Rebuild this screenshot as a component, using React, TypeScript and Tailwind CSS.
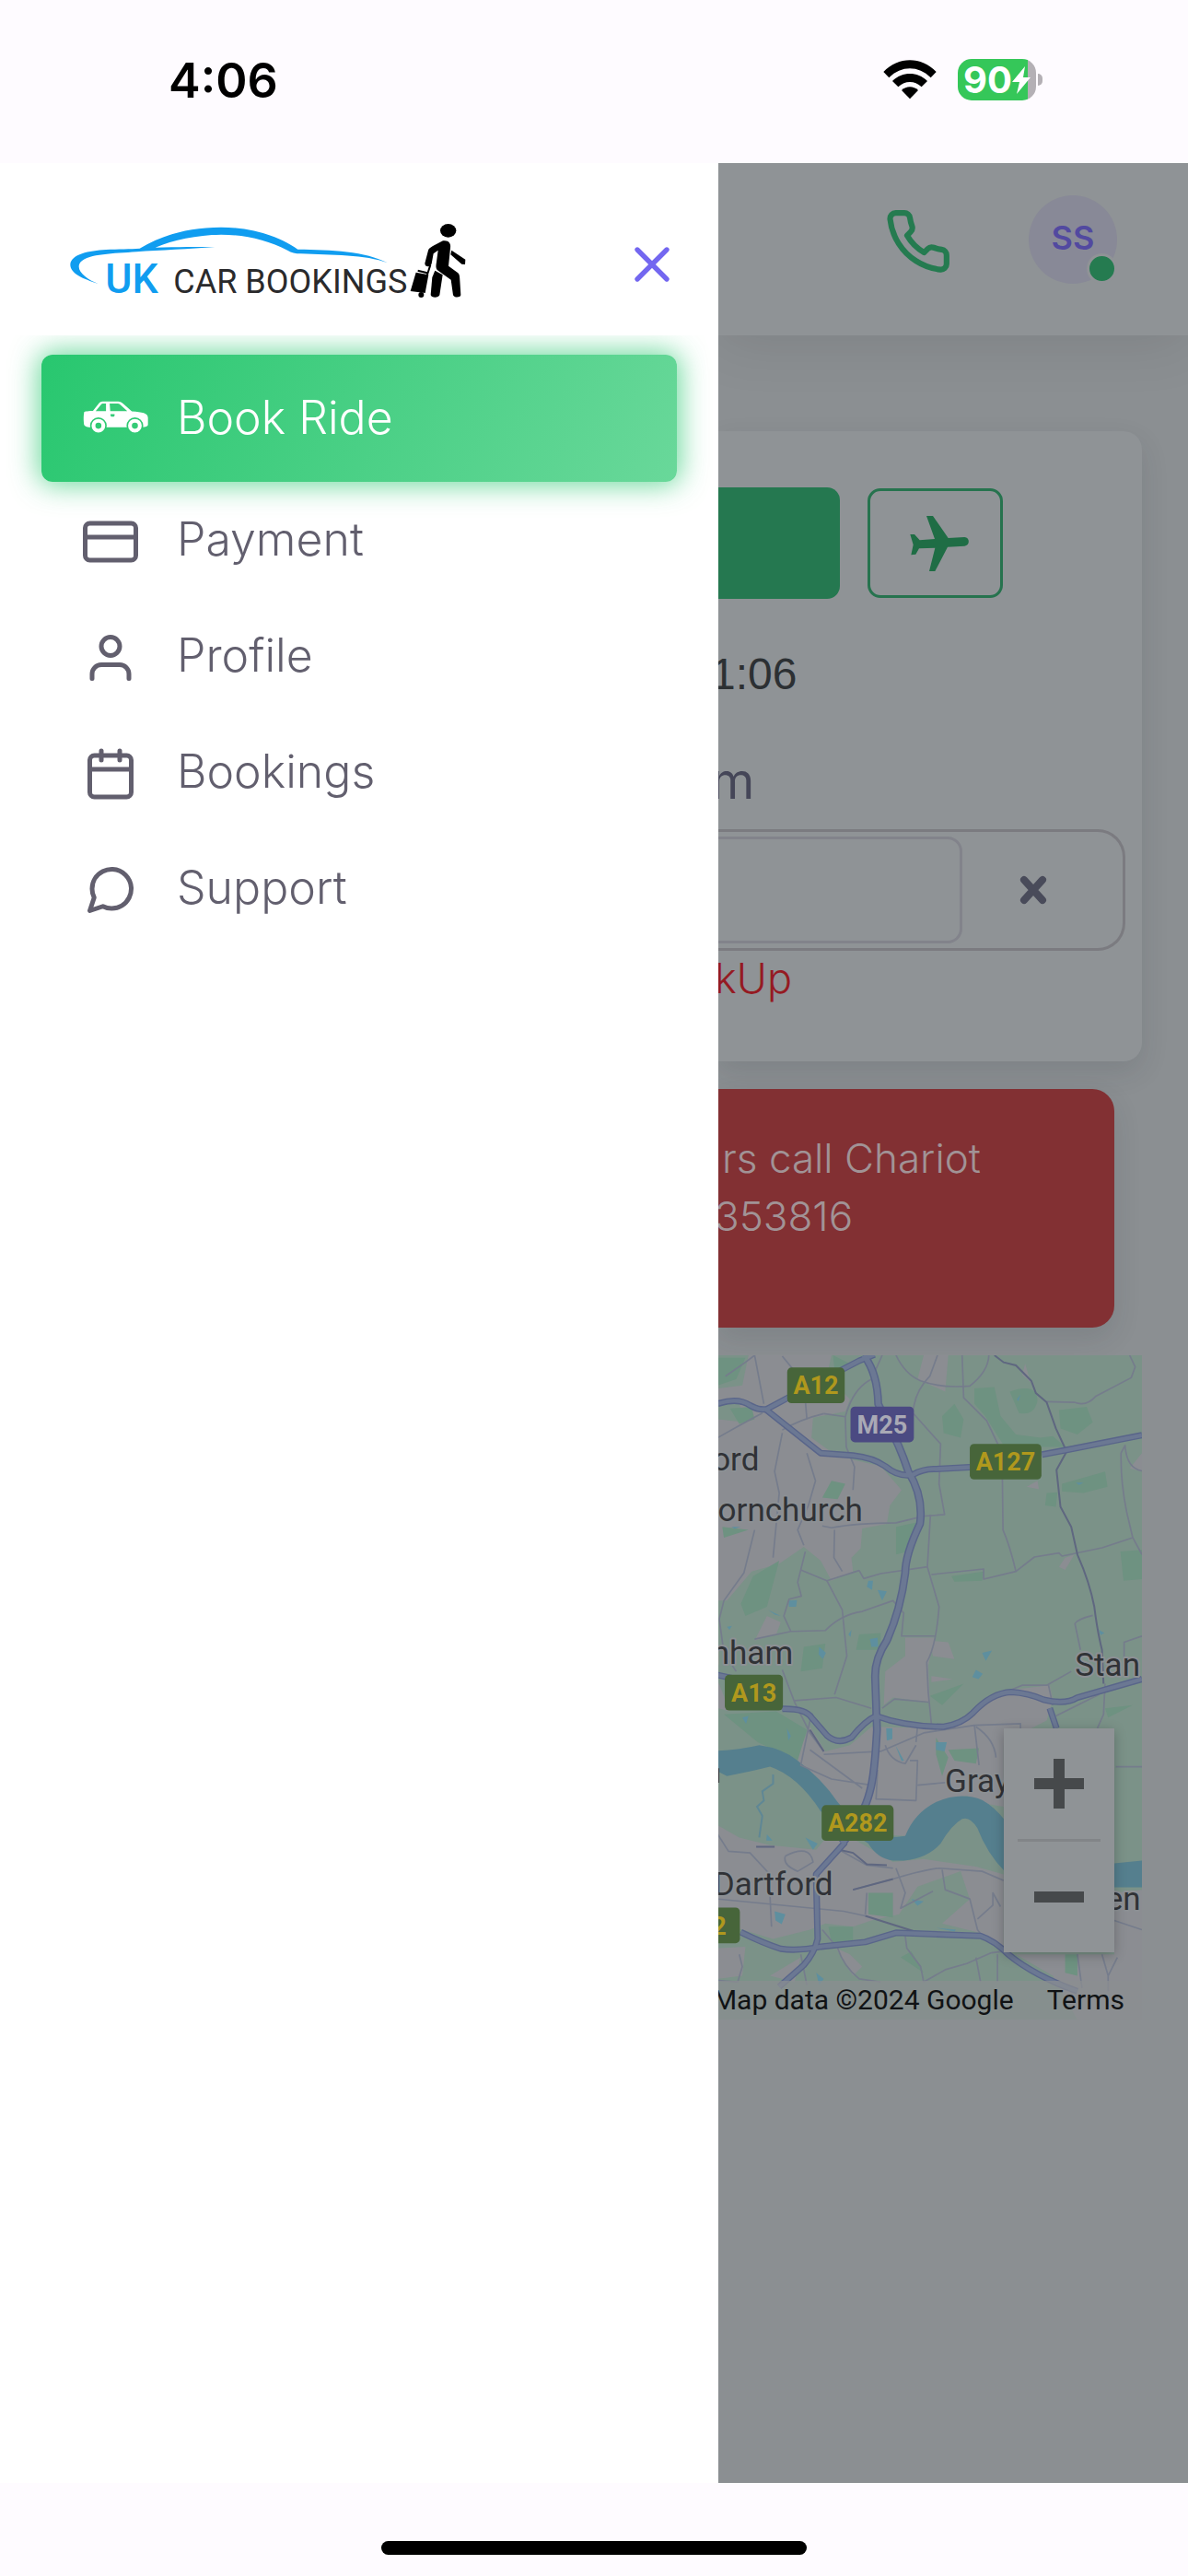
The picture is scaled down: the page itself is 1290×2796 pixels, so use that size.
import type { ReactNode } from "react";
import { FiCalendar, FiCreditCard, FiMessageCircle, FiPhone, FiUser, FiX } from "react-icons/fi";

const StatusBar = () => (
  <header className="flex h-[177px] shrink-0 items-start justify-between bg-[#fefbff] pt-[56px] pr-[158px] pl-[183px]">
    <span className="text-[52px] leading-[64px] font-semibold text-black">4:06</span>
    <div className="flex items-center gap-[23px] pt-2">
      <svg className="h-[43px] w-[58px]" viewBox="59 44 174 129" fill="#000">
        <path d="M60 83C108 32 184 32 232 83L214 102C174 62 118 62 78 102Z" />
        <path d="M89 113C122 81 170 81 203 113L184 132C161 111 131 111 108 132Z" />
        <path d="M119 143C134 128 158 128 173 143L146 171Z" />
      </svg>
      <div className="flex items-center gap-[2px]">
        <div className="flex h-[45px] w-[85px] items-center rounded-[15px] bg-linear-to-r from-[#35c759] from-90% to-[#b4b0b5] to-90% pl-[6px]">
          <span className="text-[40px] leading-[45px] font-bold text-white">90</span>
          <svg className="h-[30px] w-[20px]" viewBox="0 0 20 30" fill="#fff">
            <path d="M14 0L0 17h8L5 30 20 12h-8z" />
          </svg>
        </div>
        <div className="h-[13px] w-[5px] rounded-r-full bg-[#b4b0b5]" />
      </div>
    </div>
  </header>
);

const Logo = () => (
  <svg className="h-[92px] w-[432px]" viewBox="45 60 1296 276" role="img" aria-label="UK Car Bookings">
    {/* Car outline */}
    <g fill="#109df0">
      <path d="M140 261C90 245 48 228 49 198C52 165 110 153 165 150C205 148 245 148 275 146C350 102 430 78 540 77C650 78 735 110 790 149C900 150 1010 155 1083 193C1010 166 900 168 800 163C782 163 768 160 758 153C690 118 620 102 540 101C460 102 385 118 326 143C400 141 460 141 520 141C440 148 340 151 265 157C190 163 110 163 83 190C62 215 100 245 140 261Z" />
    </g>
    <text x="163" y="292" fontSize="134" fontWeight="500" fill="#109df0" className="font-['Liberation_Sans_Narrow',Roboto,sans-serif]">UK</text>
    <text x="385" y="292" fontSize="108" fill="#2a2a2c" className="font-[Roboto,sans-serif]">CAR BOOKINGS</text>
    {/* Traveller */}
    <g fill="#000">
      <ellipse cx="1280" cy="88" rx="26" ry="22" />
      <path d="M1263 121C1280 118 1290 128 1287 145L1281 203L1312 226C1318 231 1317 240 1318 250L1321 298C1320 306 1300 308 1296 298L1289 248L1244 216C1239 210 1240 202 1242 190L1247 152L1232 163L1226 196C1222 210 1203 206 1204 194L1215 152C1217 146 1222 143 1230 138Z" />
      <path d="M1291 152L1336 182L1335 198L1324 197L1288 166Z" />
      <path d="M1237 218L1262 232L1252 298C1248 308 1225 308 1223 297L1228 240Z" />
      <path d="M1175 224L1216 232L1205 291L1157 285Z" />
      <circle cx="1192" cy="297" r="9" />
    </g>
    <path d="M1222 200L1211 234M1181 218L1212 226" stroke="#000" strokeWidth="6" />
  </svg>
);

const CarIcon = () => (
  <svg className="mb-2 h-[35px] w-[72px]" viewBox="181 214 216 106">
    <path fill="#fff" d="M184 252C184 249 190 248 213 247L234 221C238 216 242 216 250 216H296C303 216 308 220 312 223L341 249C375 252 394 254 394 270V292C394 299 385 300 375 301H200C188 300 183 296 183 287C182 275 182 262 184 252Z" />
    <path fill="#35cb77" d="M222 248L240 226Q242 223 246 223H256V248ZM268 223H294Q299 223 303 227L326 248H270ZM271 258H284Q286 263 282 266H273Q269 262 271 258Z" />
    <g fill="#fff" stroke="#2fca73" strokeWidth="5">
      <circle cx="231" cy="296" r="25" />
      <circle cx="351" cy="296" r="25" />
    </g>
    <circle cx="231" cy="296" r="10" fill="#2fca73" />
    <circle cx="351" cy="296" r="10" fill="#35cb77" />
  </svg>
);

const menuItems = [
  { label: "Payment", icon: <FiCreditCard size={60} /> },
  { label: "Profile", icon: <FiUser size={60} /> },
  { label: "Bookings", icon: <FiCalendar size={60} /> },
  { label: "Support", icon: <FiMessageCircle size={60} /> },
];

const MenuLink = ({ label, icon, active }: { label: string; icon: ReactNode; active?: boolean }) => (
  <a
    href="#"
    className={
      active
        ? "flex h-[138px] items-center rounded-[12px] bg-[linear-gradient(118deg,#28c76f,#69d89a)] pl-[45px] text-white shadow-[0_0_30px_3px_rgba(40,199,111,0.7)]"
        : "flex h-[126px] items-center pl-[45px] text-[#625f6e]"
    }
  >
    <span className="w-[102px] shrink-0 pt-1">{icon}</span>
    <span className="pb-[2px] text-[50px] leading-[60px] font-light">{label}</span>
  </a>
);

const Drawer = () => (
  <aside className="flex w-[780px] shrink-0 flex-col bg-white">
    <div className="flex h-[187px] shrink-0 items-center justify-between pt-8 pr-[40px] pl-[75px]">
      <Logo />
      <button type="button" aria-label="Close menu" className="text-[#7367f0]">
        <FiX size={64} strokeWidth={2} />
      </button>
    </div>
    <nav className="flex-1 overflow-hidden px-[45px] pt-[21px]">
      <MenuLink label="Book Ride" icon={<CarIcon />} active />
      {menuItems.map((item) => (
        <MenuLink key={item.label} label={item.label} icon={item.icon} />
      ))}
    </nav>
  </aside>
);

const roads = [
  "M30 190Q95 168 135 195Q165 212 190 207L255 172L490 50L540 30",
  "M185 207L365 350L470 358Q535 365 575 393Q620 430 665 420Q700 400 740 402L850 396",
  "M1085 355L1165 340L1410 292",
  "M30 1072L90 1085M240 1182Q315 1180 335 1210L385 1268Q420 1300 465 1275Q510 1220 545 1205Q640 1240 765 1240Q825 1230 860 1195Q920 1130 985 1127Q1040 1130 1090 1152Q1160 1170 1200 1145L1410 1085",
  "M105 1908Q180 1945 235 1962Q290 1970 365 1955L510 1940L610 1910L885 1920Q930 1935 975 1980Q1060 2050 1200 2100",
  "M445 1615L350 1720L355 1930Q345 1975 310 2015L230 2085",
  "M1110 1180L1132 1245",
];

const m25 = "M505 32Q550 90 552 190L580 250Q620 320 650 410Q700 490 688 580Q640 680 640 740Q625 860 580 960Q540 1020 542 1080L548 1250Q540 1400 525 1450Q505 1530 435 1620";

const lanes = [
  "M55 100L120 55L150 32L180 190M240 35L310 120L320 240M30 300Q100 260 175 220M375 222L445 232L448 330L475 395L470 470",
  "M240 285L215 410L230 480L210 690M320 350L348 440L325 520L290 600L310 650M240 275Q300 240 375 222M445 232Q470 140 530 110L565 32",
  "M610 32Q640 95 690 115Q760 140 850 132Q910 85 912 32M745 32L720 100Q670 150 665 220L755 320L750 450L768 550L700 555L610 577Q480 578 400 593L370 587",
  "M825 32L830 170L905 245L955 350L958 600Q980 650 1000 735L895 760V727L725 745",
  "M1000 735L1060 688L1140 675L1150 685L1280 658L1380 625L1360 540Q1340 440 1342 350L1355 325Q1360 400 1410 408M1380 625L1410 680",
  "M1100 183L1190 185Q1230 200 1260 165L1375 105L1388 70L1370 32",
  "M722 550L712 720L750 850Q740 980 710 1030L715 1130L725 1230M712 720L560 742L505 758L490 732L385 765L300 730",
  "M315 670L290 770L302 815L262 825L245 880L268 930L380 927Q430 875 500 865L600 830L635 870L628 945L738 945M268 930L150 955",
  "M385 765L435 860L450 1010L410 1135M150 600L115 740L50 830L35 890L50 1000L90 1060M410 600L408 690L435 735",
  "M1250 878Q1200 890 1192 905L1210 990M1410 945L1352 965V1020M900 1155L1020 1105L1100 1105L1180 1060M1105 1100L1120 1170",
  "M240 1055L280 1160L330 1260L375 1320M280 1155L415 1145L530 1180M330 1220L300 1365L400 1410L530 1430M330 1315L500 1440M375 1330L560 1320L700 1260L865 1235L1015 1230V1270",
  "M565 1180L605 1150L715 1160M680 1240L675 1290M575 1300Q590 1350 640 1360L675 1300M550 1380L545 1475L675 1480L680 1350L655 1350M680 1430L785 1420",
  "M865 1235L880 1365M870 1240Q930 1280 935 1340M30 1590L65 1645L135 1650L200 1720M250 1660Q330 1620 340 1680L290 1710Q240 1690 250 1660M200 1790L205 1890M30 1800L440 1840L510 1855",
  "M470 1770L600 1735Q700 1705 750 1700L890 1710L960 1740M510 1850L515 1780M610 1700L640 1780L625 1830L730 1775M760 1705L770 1770L850 1800L875 1900L890 1920M875 1865L925 1820V1780L950 1825",
  "M370 1900L420 1960Q440 2020 490 2060L560 2070M640 1920L645 1960L690 2020L700 2070M700 2070L770 2030L840 2010L920 1975L960 1970M870 1990L885 2070M940 1980L940 2070M300 1980L320 2080M100 1980L110 2020L95 2070L30 2065",
  "M1200 1980L1215 2090M1280 1980L1300 2050L1330 1990M1300 2050V2100M1320 1870L1410 1900M1325 1370H1410M1290 1100L1285 1200L1265 1245M1130 1205L1270 1135M545 1110L535 1200M425 1640L515 1690L600 1700",
];

const water = [
  "M520 765L535 765L532 795L515 785ZM550 795L580 800L565 830ZM260 830L288 828L285 850L262 850ZM360 980L382 1000L372 1020L358 1005ZM525 955L550 950L552 980L530 980ZM890 1000L922 992L902 1026ZM870 1055L892 1068L878 1085L858 1078Z",
  "M195 860L235 880L215 875ZM455 940L465 925L462 948ZM1270 925L1288 935L1275 942ZM1003 175L1015 160L1008 182ZM60 915L76 912L68 925ZM75 590H105L85 596ZM1195 446H1220L1205 454ZM110 1210L130 1205L122 1230Z",
  "M578 1245H598V1280L580 1285ZM608 1300L636 1350L628 1352ZM740 1290H775L768 1320L740 1315ZM215 1840L250 1850L238 1882L218 1870ZM660 1800L700 1808L680 1822ZM740 1894L805 1900L800 1906ZM255 1245L268 1270L260 1285ZM350 2040L375 2060L360 2080ZM315 1600L355 1620L340 1640ZM190 1590L208 1610H188Z",
];

type Badge = { x: number; y: number; w: number; text: string; motorway?: boolean };

const badges: Badge[] = [
  { x: 256, y: 72, w: 187, text: "A12" },
  { x: 462, y: 199, w: 206, text: "M25", motorway: true },
  { x: 850, y: 320, w: 233, text: "A127" },
  { x: 53, y: 1071, w: 189, text: "A13" },
  { x: 368, y: 1495, w: 234, text: "A282" },
  { x: -86, y: 1828, w: 188, text: "A2" },
];

const towns = [
  { x: 165, y: 406, text: "ord" },
  { x: 502, y: 570, text: "ornchurch" },
  { x: 275, y: 1037, text: "nham" },
  { x: 1404, y: 1074, text: "Stan" },
  { x: 980, y: 1452, text: "Gray" },
  { x: 405, y: 1789, text: "Dartford" },
  { x: 1406, y: 1835, text: "en" },
];

const AreaMap = () => (
  <svg className="block h-full w-full" viewBox="30 32 1380 2160" preserveAspectRatio="xMaxYMid slice">
    <rect x="-2000" width="3500" height="2300" fill="#7b9288" />
    {/* Built-up areas */}
    <g fill="#8b8d92">
      <path d="M130 32H400L385 100L420 135L460 175L445 215L340 235L335 300L390 340L470 372L560 392L628 470L590 520L580 580L500 595L495 660L465 690L470 735L400 765L365 700L310 655L230 710L140 735L60 830H30V240L120 250L100 190L30 185V140L110 130Z" />
      <path d="M700 32H780L770 150L680 110ZM1030 60L1045 110L1065 135L1020 95ZM1035 460L1070 440L1075 468ZM1140 720L1160 690L1190 680L1160 730ZM1410 350L1370 400L1410 410Z" />
      <path d="M640 950H735L715 1040L720 1160L600 1145L570 1170L575 1060L640 1010ZM150 960L190 880L235 900L220 940ZM720 960L780 965L800 1020L730 1010ZM725 1075L795 1085L725 1095Z" />
      <path d="M980 1120L1110 1105L1120 1150L1100 1220L1020 1260V1300H960V1500L900 1490L840 1465L740 1490L640 1595L560 1590L440 1510L330 1400L270 1370L330 1240L380 1320L460 1300L530 1240L770 1245L850 1210L900 1150Z" />
      <path d="M30 1560L100 1600L200 1625L350 1640L400 1580L480 1610L600 1680L700 1670L870 1695L960 1720V1975L880 1910L760 1880L850 1800L820 1710L680 1760L620 1850L530 1870L470 1890L380 1880L330 1900L210 1930L110 1900L30 1870Z" />
      <path d="M1320 1780L1410 1770V2192H1200L1120 2050L1000 1980H1320ZM30 1960L120 1955L110 2050L30 2060ZM415 1960L460 1980L500 2020L470 2050ZM30 1090L70 1190L30 1180ZM200 2050L300 1990L280 2070Z" />
    </g>
    {/* Woods and parks */}
    <g fill="#6e9281">
      <path d="M30 40H120L90 110L30 130ZM70 205L140 200L150 240L100 255ZM405 32L460 60L410 80ZM865 140L930 135L950 230L1000 290L1080 300L1120 295L1160 330H1080L960 325L900 230L865 190Z" />
      <path d="M760 230L800 190L830 240L820 300L765 285ZM1140 210L1230 200L1250 250L1200 290L1145 270ZM980 150Q1070 120 1070 180Q1060 230 1010 220ZM1100 480L1135 478L1130 525L1095 520ZM1150 450L1290 410L1298 460L1220 480L1150 475ZM1340 670L1410 665V760L1350 765Z" />
      <path d="M105 840L145 750L230 700L190 850L120 880ZM610 590L680 575L650 670L610 680ZM790 750L895 735L890 765L800 768ZM45 590L130 600L50 625ZM400 440L445 450L420 500L370 495ZM310 980L380 970L370 1050L300 1060ZM490 940L560 935L560 990L480 990Z" />
      <path d="M50 1200L220 1190L320 1250L290 1350L160 1290ZM740 1275L780 1340L760 1400L740 1330ZM780 1315L880 1310L870 1360L800 1350ZM1160 1980H1200V2050L1160 2040ZM625 1990L660 1970L700 2040ZM390 1890L470 1890V1940L400 1940ZM520 1780L600 1780V1860L520 1850ZM720 1140L830 1100L760 1170ZM1290 1180L1380 1170L1300 1210Z" />
    </g>
    {/* Thames */}
    <path fill="#557f8e" d="M30 1318Q100 1315 165 1300Q240 1310 290 1350Q370 1410 420 1485L510 1590Q580 1605 640 1595Q670 1520 740 1485Q820 1450 890 1478Q930 1500 965 1545V1712Q905 1650 875 1570Q850 1530 825 1540Q790 1560 755 1620Q700 1680 600 1675Q550 1670 520 1620L365 1515Q290 1400 200 1370Q120 1390 60 1400L30 1385ZM1320 1684L1410 1675V1762H1320Z" />
    <g fill="#5e8f9f">
      {water.map((d) => (
        <path key={d} d={d} />
      ))}
    </g>
    <path d="M210 1395V1425L175 1450L180 1480L158 1500L175 1530L165 1600" fill="none" stroke="#5f8795" strokeWidth="6" />
    <g fill="none" stroke="#757c8c" strokeWidth="5" strokeLinejoin="round">
      {lanes.map((d) => (
        <path key={d} d={d} />
      ))}
    </g>
    <path d="M930 32L960 55L1000 65L1050 115L1065 155L1100 185L1130 270L1165 345L1132 405L1145 525L1180 590L1200 680Q1240 770 1255 850Q1265 930 1280 990L1285 1100M510 1855L690 1912M470 1770L600 1735M330 1250L375 1320M155 1630H215M425 1640L470 1650L515 1687L580 1690" fill="none" stroke="#5f6780" strokeWidth="6" />
    {/* Trunk roads, outline first */}
    <g fill="none" strokeLinejoin="round">
      {roads.map((d) => (
        <path key={d} d={d} stroke="#59658a" strokeWidth="21" />
      ))}
      <path d={m25} stroke="#59658a" strokeWidth="26" />
      {roads.map((d) => (
        <path key={d} d={d} stroke="#6b7893" strokeWidth="13" />
      ))}
      <path d={m25} stroke="#6b7893" strokeWidth="17" />
    </g>
    <g className="font-[Roboto,sans-serif]" fontSize="105" textAnchor="end" fill="#303236" stroke="#8c9094" strokeWidth="12" paintOrder="stroke" strokeLinejoin="round">
      {towns.map((town) => (
        <text key={town.text} x={town.x} y={town.y}>{town.text}</text>
      ))}
    </g>
    <path d="M30 1375V1422" stroke="#303236" strokeWidth="10" />
    <g className="font-[Roboto,sans-serif]" fontSize="81" fontWeight="700" textAnchor="middle">
      {badges.map((b) => (
        <g key={b.text}>
          <rect x={b.x} y={b.y} width={b.w} height="116" rx="14" fill={b.motorway ? "#4b4a82" : "#47653a"} />
          <text x={b.x + b.w / 2} y={b.y + 87} fill={b.motorway ? "#a9a9b5" : "#b0981d"}>{b.text}</text>
        </g>
      ))}
    </g>
  </svg>
);

const BookingCard = () => (
  <div className="flex h-[684px] flex-col rounded-r-[20px] bg-[#8f9396] pt-[61px] pr-[18px] shadow-[0_12px_30px_rgba(34,41,47,0.12)]">
    <div className="flex items-center gap-[30px]">
      <button type="button" aria-label="Ride" className="h-[121px] w-[132px] rounded-r-[14px] bg-[#257850]" />
      <button type="button" aria-label="Airport transfer" className="flex h-[119px] w-[147px] items-center justify-center rounded-[14px] border-[3px] border-[#26734e] pl-2">
        <svg className="h-[60px] w-[64px]" viewBox="182 120 192 180" fill="#1f6d45">
          <path d="M236 120H257L307 192L360 189C378 190 378 217 360 218L305 221L264 300H245L264 224L212 226L201 245L186 247L193 214L183 180H197L214 199L263 195Z" />
        </svg>
      </button>
    </div>
    <span className="mt-[54px] -ml-2 font-['Liberation_Sans',Arial,sans-serif] text-[48px] leading-[56px] text-[#2c3033]">1:06</span>
    <span className="mt-[56px] -ml-2 text-[54px] leading-[64px] text-[#454658]">m</span>
    <div className="mt-[20px] flex h-[132px] items-center rounded-r-[30px] border-[3px] border-l-0 border-[#7b7b80] pr-[62px]">
      <input aria-label="Pick up address" className="h-[116px] w-[265px] rounded-r-[16px] border-[3px] border-l-0 border-[#82838b] bg-transparent outline-none" />
      <button type="button" aria-label="Clear address" className="ml-[60px]">
        <svg className="h-[34px] w-[34px]" viewBox="0 0 34 34" stroke="#494b5a" strokeWidth="8" strokeLinecap="round">
          <path d="M7 6L27 28M27 6L7 28" />
        </svg>
      </button>
    </div>
    <span className="mt-[5px] -ml-1 text-[45px] leading-[50px] font-light text-[#951a22]">kUp</span>
  </div>
);

const MapPanel = () => (
  <div className="relative h-[721px] overflow-hidden">
    <AreaMap />
    <div className="absolute right-[30px] bottom-[73px] flex h-[243px] w-[120px] flex-col items-center bg-[#8f9396] shadow-[0_3px_12px_rgba(0,0,0,0.25)]">
      <button type="button" aria-label="Zoom in" className="flex flex-1 items-center justify-center">
        <svg className="h-[54px] w-[54px]" viewBox="0 0 54 54" stroke="#46494b" strokeWidth="12">
          <path d="M27 0V54M0 27H54" />
        </svg>
      </button>
      <div className="h-[3px] w-[90px] bg-[#828588]" />
      <button type="button" aria-label="Zoom out" className="flex flex-1 items-center justify-center">
        <svg className="h-[54px] w-[54px]" viewBox="0 0 54 54" stroke="#46494b" strokeWidth="12">
          <path d="M0 27H54" />
        </svg>
      </button>
    </div>
    <div className="absolute right-0 bottom-0 flex h-[42px] w-full items-center justify-end gap-[36px] bg-[#8b8f92]/70 pr-[19px] font-[Roboto,sans-serif] text-[30px] leading-[42px] whitespace-nowrap text-[#111315]">
      <span>Map data ©2024 Google</span>
      <a href="#">Terms</a>
    </div>
  </div>
);

const BookingPage = () => (
  <section className="min-w-0 flex-1 overflow-hidden bg-[#8b8f92]">
    <div className="flex h-[187px] items-center justify-end gap-[83px] bg-[#8f9396] pr-[77px] pb-[22px] shadow-[0_6px_60px_rgba(0,0,0,0.1)]">
      <a href="#" aria-label="Call us" className="pt-1 text-[#257b50]">
        <FiPhone size={74} />
      </a>
      <div className="relative flex h-24 w-24 items-center justify-center rounded-full bg-[#888997] pb-1 text-[36px] leading-none font-semibold text-[#5249a0]">
        SS
        <span className="absolute right-0 bottom-0 h-[33px] w-[33px] rounded-full border-[3px] border-[#8f9396] bg-[#257b50]" />
      </div>
    </div>
    <div className="flex flex-col gap-[30px] pt-[104px] pr-[50px]">
      <BookingCard />
      <div className="mr-[30px] h-[259px] rounded-r-[24px] bg-[#823033] pt-[44px] pl-1 text-[44px] leading-[63px] font-light text-[#a19396] shadow-[0_12px_30px_rgba(34,41,47,0.12)]">
        <p>rs call Chariot</p>
        <p className="-ml-2">353816</p>
      </div>
      <MapPanel />
    </div>
  </section>
);

const App = () => {
  return (
    <main className="flex min-h-screen flex-col bg-[#fefbff] font-[Inter,sans-serif]">
      <StatusBar />
      <div className="flex flex-1">
        <Drawer />
        <BookingPage />
      </div>
      {/* Home indicator */}
      <footer className="flex h-[101px] shrink-0 items-end justify-center pb-[23px]">
        <div className="h-[15px] w-[462px] rounded-full bg-black" />
      </footer>
    </main>
  );
};

export default App;
